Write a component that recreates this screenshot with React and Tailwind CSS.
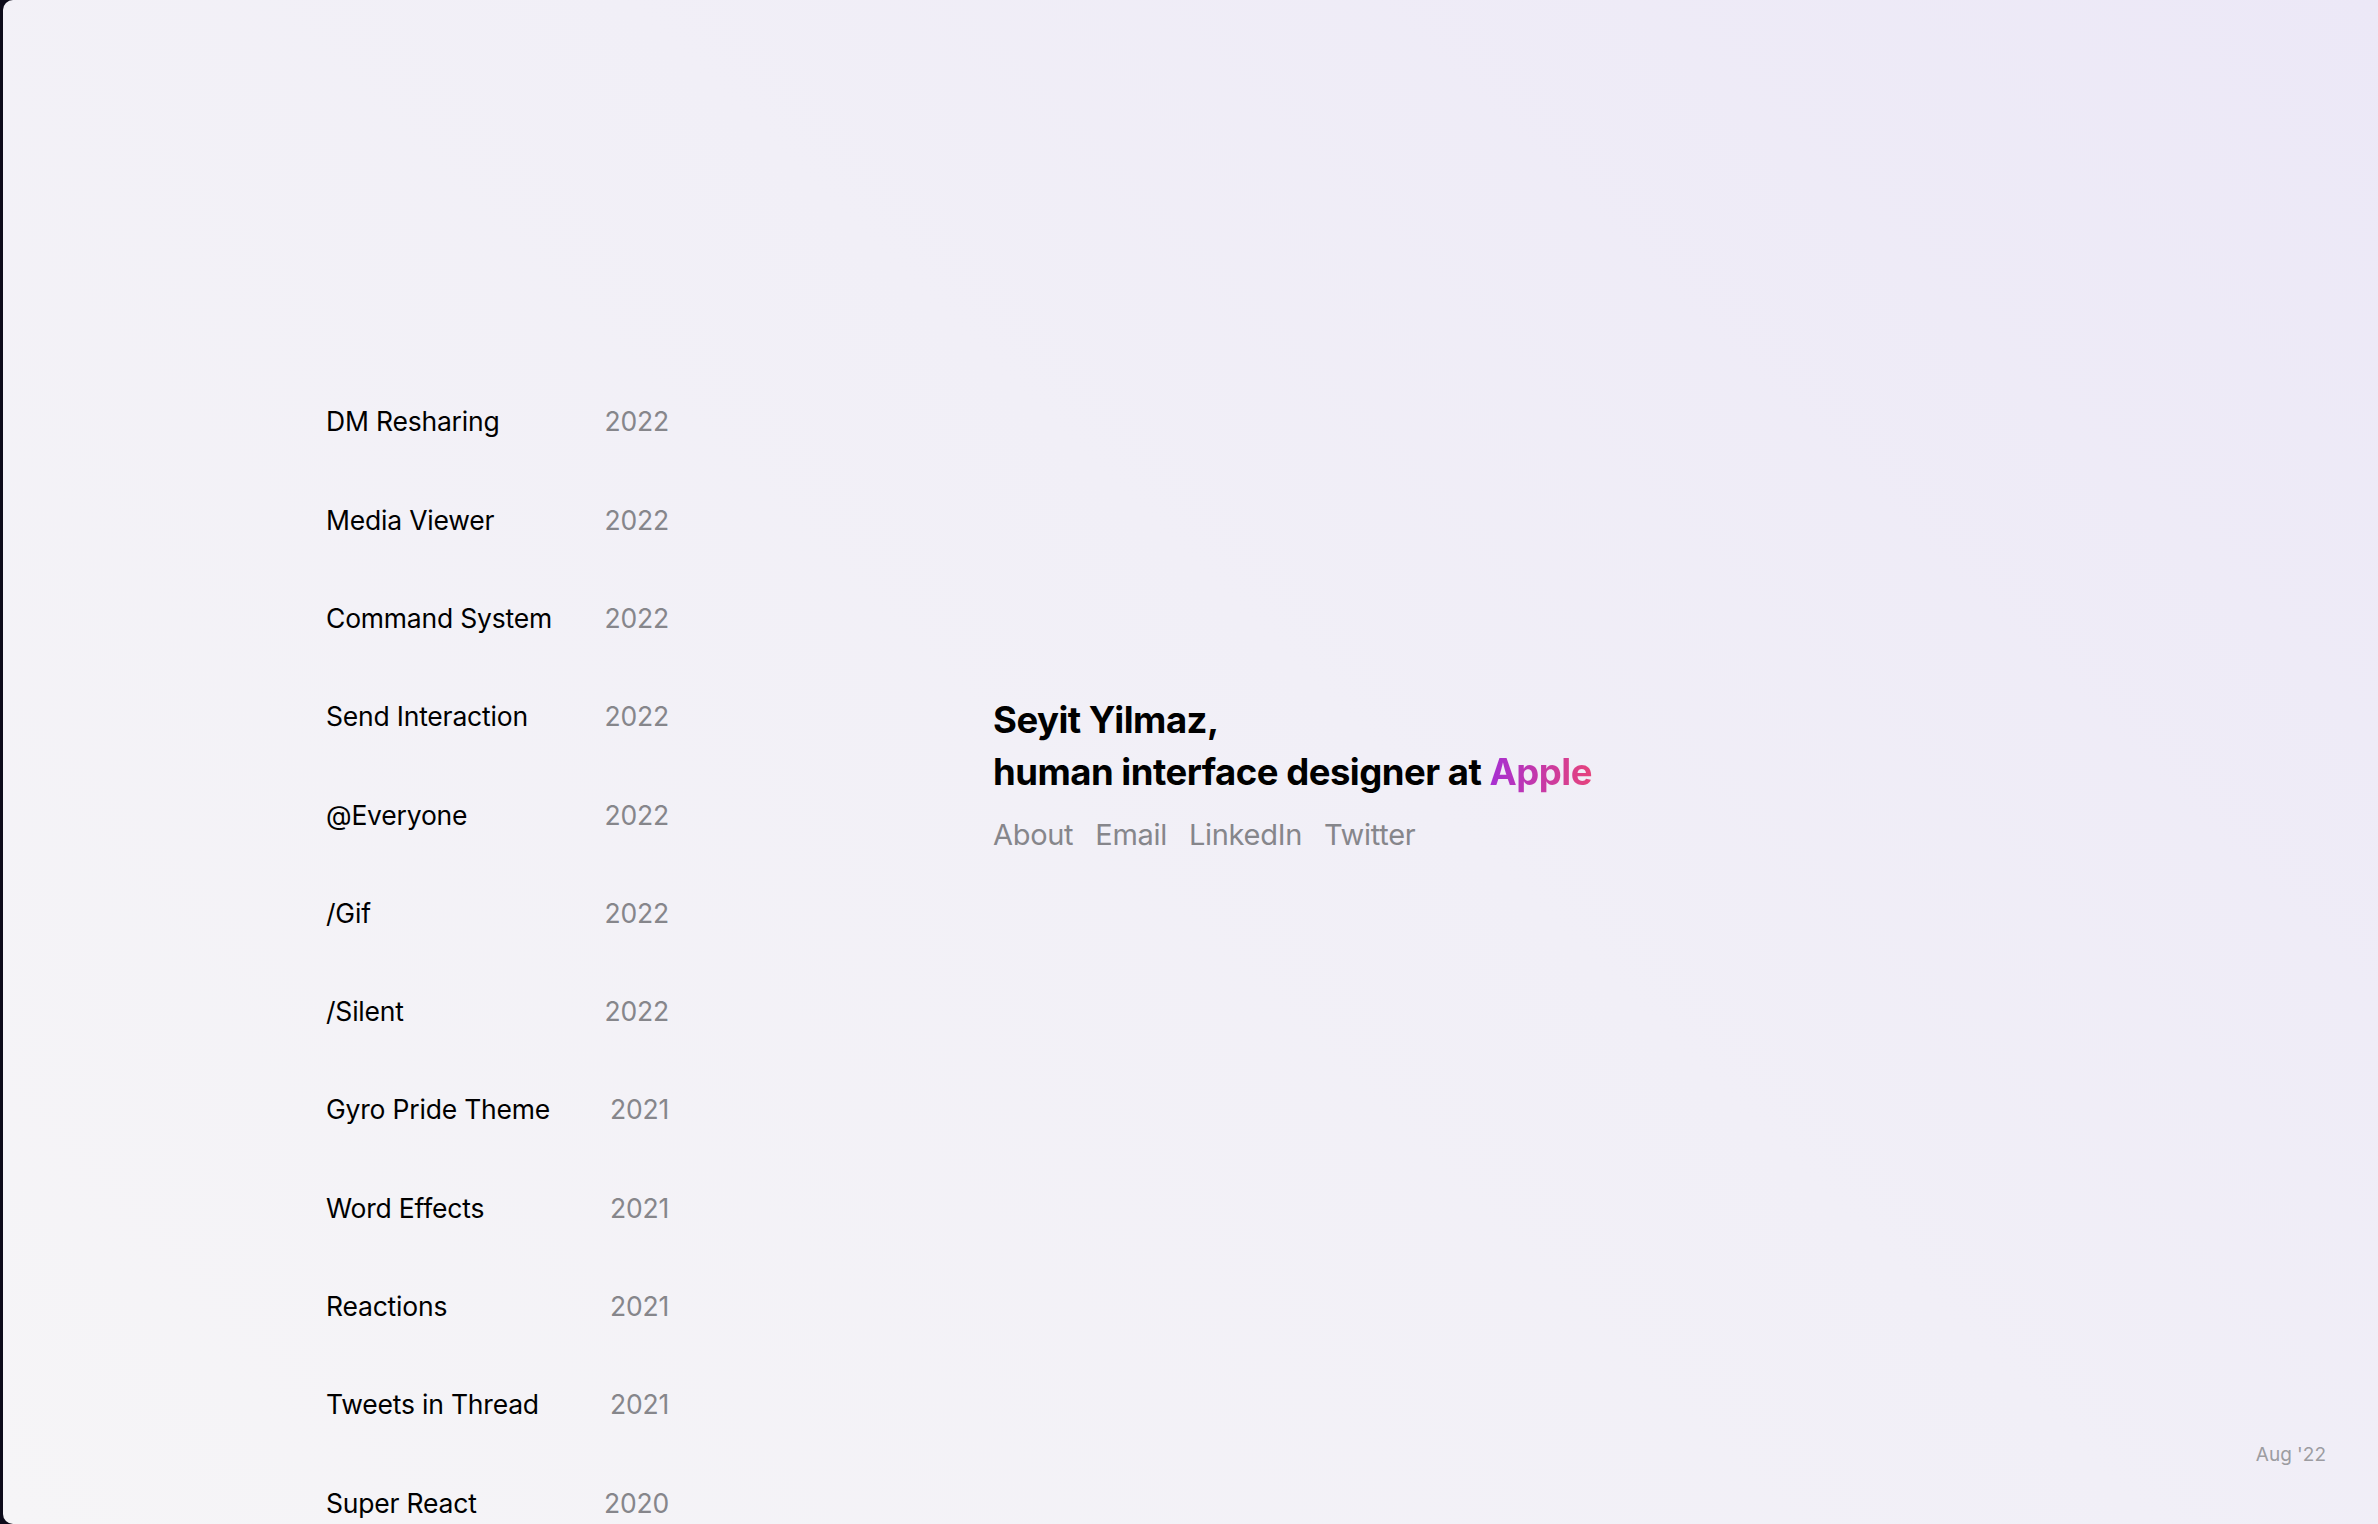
import React from "react";

const items = [
  ["DM Resharing", "2022"],
  ["Media Viewer", "2022"],
  ["Command System", "2022"],
  ["Send Interaction", "2022"],
  ["@Everyone", "2022"],
  ["/Gif", "2022"],
  ["/Silent", "2022"],
  ["Gyro Pride Theme", "2021"],
  ["Word Effects", "2021"],
  ["Reactions", "2021"],
  ["Tweets in Thread", "2021"],
  ["Super React", "2020"],
];

export default function App() {
  return (
    <div className="h-screen w-full bg-[#0d0b1a] flex overflow-hidden" style={{ fontFamily: "Inter, 'Noto Sans', sans-serif" }}>
      <div className="relative flex-1 ml-[3px] rounded-l-[10px] overflow-hidden bg-[linear-gradient(225deg,#ece8f7_0%,#f1eff7_45%,#f6f5f7_100%)] flex">
        <div className="w-[323px] shrink-0" />
        <div className="w-[343px] shrink-0 pt-[372.5px] flex flex-col">
          {items.map(([name, year]) => (
            <div key={name} className="h-[98.3px] shrink-0 flex items-center justify-between">
              <span className="text-[26.5px] leading-none text-black tracking-[-0.2px]">{name}</span>
              <span className="text-[26.5px] leading-none text-[#86868b] tracking-[-0.2px]">{year}</span>
            </div>
          ))}
        </div>
        <div className="w-[324px] shrink-0" />
        <div className="flex flex-col pt-[694px]">
          <h1 className="text-[36.5px] leading-[52px] font-bold text-black tracking-[-0.5px]">
            Seyit Yilmaz,
            <br />
            human interface designer at{" "}
            <span className="bg-[linear-gradient(90deg,#a62fd3,#e6437c)] bg-clip-text text-transparent">Apple</span>
          </h1>
          <div className="mt-[11px] flex gap-[22px] text-[29px] leading-[52px] text-[#86868b] tracking-[-0.3px]">
            <span>About</span>
            <span>Email</span>
            <span>LinkedIn</span>
            <span>Twitter</span>
          </div>
        </div>
        <div className="absolute right-[52px] bottom-[57px] text-[19px] leading-[24px] text-[#9c9ca1]">Aug '22</div>
      </div>
    </div>
  );
}
